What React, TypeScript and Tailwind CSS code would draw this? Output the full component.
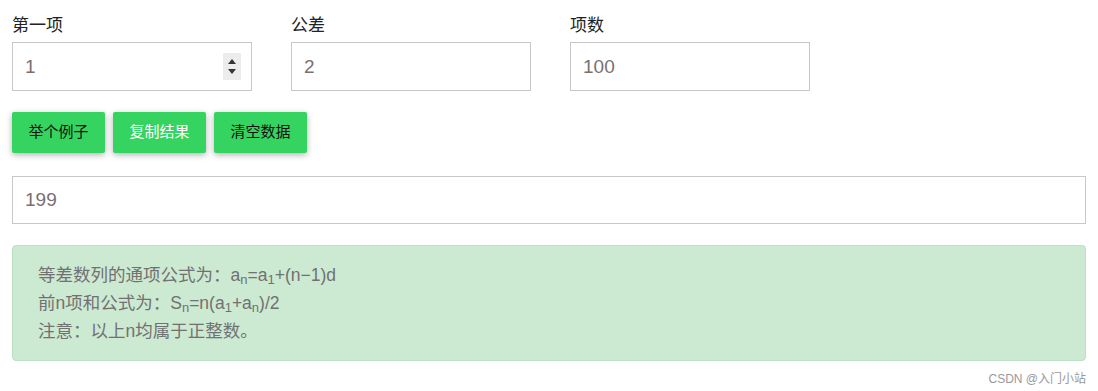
const font = "font-['Liberation_Sans','Noto_Sans_CJK_SC',sans-serif]";

function Field({ label, value, spinner }: { label: string; value: string; spinner?: boolean }) {
  return (
    <div className="flex w-[240px] flex-col">
      <label className="mb-1 text-[17px] leading-6 text-[#222]">{label}</label>
      <div className="relative">
        <input
          readOnly
          value={value}
          className="h-[49px] w-full border border-[#c8c8c8] bg-white px-3 text-[19px] text-[#7a7070] outline-none"
        />
        {spinner && (
          <div className="absolute right-[11px] top-[11px] flex h-[27px] w-[18px] flex-col items-center justify-center gap-[5px] bg-[#ececec]">
            <span className="h-0 w-0 border-x-[4px] border-b-[5px] border-x-transparent border-b-[#333]" />
            <span className="h-0 w-0 border-x-[4px] border-t-[5px] border-x-transparent border-t-[#333]" />
          </div>
        )}
      </div>
    </div>
  );
}

function Btn({ children, light }: { children: string; light?: boolean }) {
  return (
    <button
      className={`h-[41px] rounded-[2px] bg-[#35d35f] px-[16.5px] text-[15px] shadow-[0_2px_6px_rgba(0,0,0,0.3)] ${
        light ? "text-white" : "text-[#111]"
      }`}
    >
      {children}
    </button>
  );
}

function Sub({ children }: { children: string }) {
  return <sub className="text-[13px] leading-none">{children}</sub>;
}

export default function App() {
  return (
    <div className={`relative h-[391px] w-full bg-white px-3 pt-[14px] ${font}`}>
      <div className="flex gap-[39px]">
        <Field label="第一项" value="1" spinner />
        <Field label="公差" value="2" />
        <Field label="项数" value="100" />
      </div>

      <div className="mt-[21px] flex gap-2">
        <Btn>举个例子</Btn>
        <Btn light>复制结果</Btn>
        <Btn>清空数据</Btn>
      </div>

      <input
        readOnly
        value="199"
        className="mt-[23px] h-[48px] w-full border border-[#c8c8c8] bg-white px-3 text-[19px] text-[#7a7070] outline-none"
      />

      <div className="mt-[21px] rounded-[4px] border border-[#b9e2c2] bg-[#cce9d2] px-[25px] py-[15px] text-[17.5px] leading-[28px] text-[#717171]">
        <div>
          等差数列的通项公式为：a<Sub>n</Sub>=a<Sub>1</Sub>+(n−1)d
        </div>
        <div>
          前n项和公式为：S<Sub>n</Sub>=n(a<Sub>1</Sub>+a<Sub>n</Sub>)/2
        </div>
        <div>注意：以上n均属于正整数。</div>
      </div>

      <div className="mt-[9px] text-right text-[12px] text-[#999]">CSDN @入门小站</div>
    </div>
  );
}
